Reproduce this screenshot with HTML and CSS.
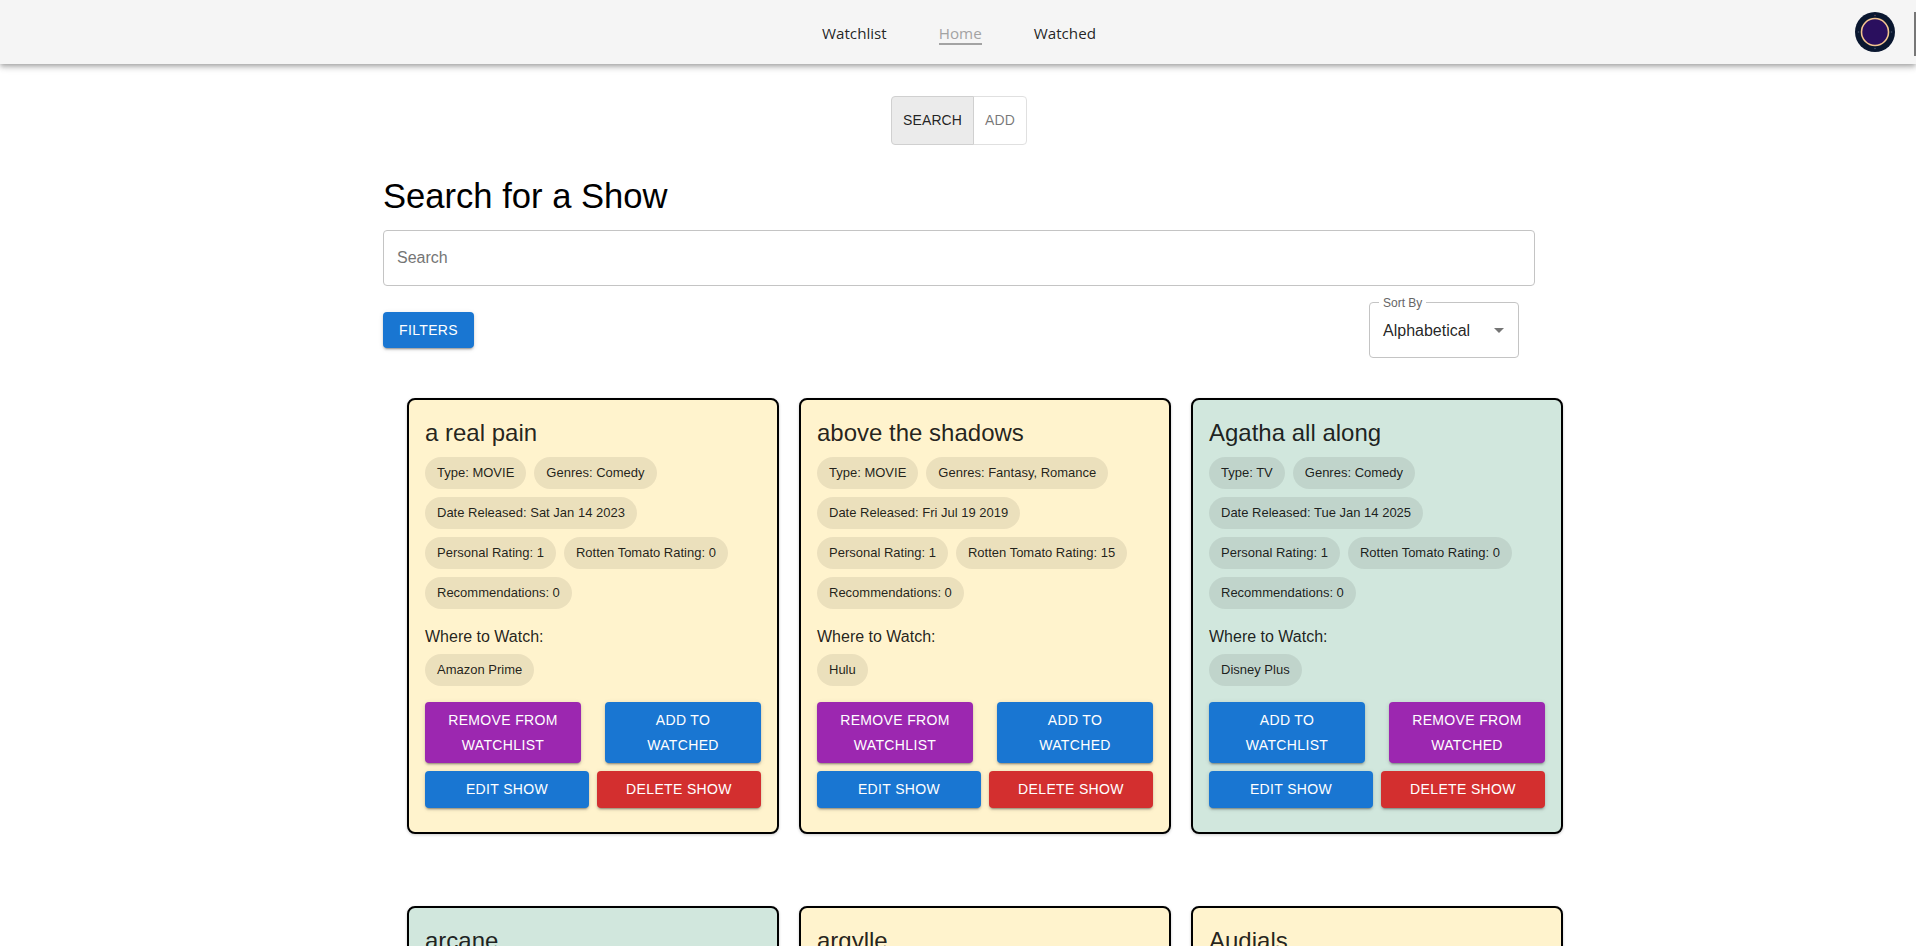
FILE: index.html
```html
<!DOCTYPE html>
<html lang="en">
<head>
    <meta charset="UTF-8">
    <title>Show Tracker</title>
    <link rel="stylesheet" href="styles.css">
</head>
<body>
    <header class="topbar">
        <nav class="topnav">
            <a class="navlink" href="#">Watchlist</a>
            <a class="navlink active" href="#">Home</a>
            <a class="navlink" href="#">Watched</a>
        </nav>
        <svg class="avatar" width="40" height="40" viewBox="0 0 40 40">
            <circle cx="20" cy="20" r="20" fill="#0a1730"/>
            <circle cx="20" cy="20" r="13.5" fill="#2a0f5e" stroke="#f3c48f" stroke-width="1.6"/>
            <circle cx="20" cy="3.5" r="0.8" fill="#6b4a55"/>
            <circle cx="20" cy="36.5" r="0.8" fill="#44506b"/>
            <circle cx="3.5" cy="20" r="0.8" fill="#44506b"/>
            <circle cx="36.5" cy="20" r="0.8" fill="#44506b"/>
        </svg>
        <span class="edgebar"></span>
    </header>

    <main class="page">
        <div class="toggle">
            <button class="togglebtn selected">Search</button>
            <button class="togglebtn">Add</button>
        </div>

        <div class="searchwrap">
            <h1 class="pagetitle">Search for a Show</h1>
            <input class="searchbox" type="text" placeholder="Search">
            <div class="toolbar">
                <button class="btn blue">Filters</button>
                <div class="sortbox">
                    <span class="sortlabel">Sort By</span>
                    <span>Alphabetical</span>
                    <svg class="caret" width="10" height="5" viewBox="0 0 10 5"><path d="M0 0h10L5 5z" fill="#757575"/></svg>
                </div>
            </div>

            <div class="cards">
                <article class="card movie">
                    <h2 class="cardtitle">a real pain</h2>
                    <div class="chips">
                        <div class="chiprow">
                            <span class="chip">Type: MOVIE</span>
                            <span class="chip">Genres: Comedy</span>
                        </div>
                        <div class="chiprow">
                            <span class="chip">Date Released: Sat Jan 14 2023</span>
                        </div>
                        <div class="chiprow">
                            <span class="chip">Personal Rating: 1</span>
                            <span class="chip">Rotten Tomato Rating: 0</span>
                        </div>
                        <div class="chiprow">
                            <span class="chip">Recommendations: 0</span>
                        </div>
                    </div>
                    <p class="wherelabel">Where to Watch:</p>
                    <div class="chiprow">
                        <span class="chip">Amazon Prime</span>
                    </div>
                    <div class="listbtns">
                        <button class="btn purple">Remove from Watchlist</button>
                        <button class="btn blue">Add to Watched</button>
                    </div>
                    <div class="editbtns">
                        <button class="btn blue">Edit Show</button>
                        <button class="btn red">Delete Show</button>
                    </div>
                </article>

                <article class="card movie">
                    <h2 class="cardtitle">above the shadows</h2>
                    <div class="chips">
                        <div class="chiprow">
                            <span class="chip">Type: MOVIE</span>
                            <span class="chip">Genres: Fantasy, Romance</span>
                        </div>
                        <div class="chiprow">
                            <span class="chip">Date Released: Fri Jul 19 2019</span>
                        </div>
                        <div class="chiprow">
                            <span class="chip">Personal Rating: 1</span>
                            <span class="chip">Rotten Tomato Rating: 15</span>
                        </div>
                        <div class="chiprow">
                            <span class="chip">Recommendations: 0</span>
                        </div>
                    </div>
                    <p class="wherelabel">Where to Watch:</p>
                    <div class="chiprow">
                        <span class="chip">Hulu</span>
                    </div>
                    <div class="listbtns">
                        <button class="btn purple">Remove from Watchlist</button>
                        <button class="btn blue">Add to Watched</button>
                    </div>
                    <div class="editbtns">
                        <button class="btn blue">Edit Show</button>
                        <button class="btn red">Delete Show</button>
                    </div>
                </article>

                <article class="card tv">
                    <h2 class="cardtitle">Agatha all along</h2>
                    <div class="chips">
                        <div class="chiprow">
                            <span class="chip">Type: TV</span>
                            <span class="chip">Genres: Comedy</span>
                        </div>
                        <div class="chiprow">
                            <span class="chip">Date Released: Tue Jan 14 2025</span>
                        </div>
                        <div class="chiprow">
                            <span class="chip">Personal Rating: 1</span>
                            <span class="chip">Rotten Tomato Rating: 0</span>
                        </div>
                        <div class="chiprow">
                            <span class="chip">Recommendations: 0</span>
                        </div>
                    </div>
                    <p class="wherelabel">Where to Watch:</p>
                    <div class="chiprow">
                        <span class="chip">Disney Plus</span>
                    </div>
                    <div class="listbtns">
                        <button class="btn blue">Add to Watchlist</button>
                        <button class="btn purple">Remove from Watched</button>
                    </div>
                    <div class="editbtns">
                        <button class="btn blue">Edit Show</button>
                        <button class="btn red">Delete Show</button>
                    </div>
                </article>

                <article class="card tv">
                    <h2 class="cardtitle">arcane</h2>
                </article>
                <article class="card movie">
                    <h2 class="cardtitle">argylle</h2>
                </article>
                <article class="card movie">
                    <h2 class="cardtitle">Audials</h2>
                </article>
            </div>
        </div>
    </main>
</body>
</html>
```

FILE: styles.css
```css
html, body {
    height: 100%;
    overflow: hidden;
}

body {
    margin: 0;
    background-color: #fff;
    color: #000;
    font-family: "Liberation Sans", Arial, sans-serif;
}

button {
    font-family: inherit;
    cursor: pointer;
}

.topbar {
    position: relative;
    height: 64px;
    display: flex;
    align-items: center;
    justify-content: center;
    padding-left: 2px;
    background-color: #f5f5f5;
    box-shadow: 0 2px 4px -1px rgba(0,0,0,0.2), 0 4px 5px 0 rgba(0,0,0,0.14), 0 1px 10px 0 rgba(0,0,0,0.12);
}

.topnav {
    display: flex;
    gap: 52px;
    padding-top: 1px;
}

.navlink {
    font-family: "Open Sans", sans-serif;
    font-size: 15.2px;
    line-height: 20px;
    color: rgba(0,0,0,0.87);
    text-decoration: none;
}

.navlink.active {
    color: #a3a3a3;
    box-shadow: 0 2px 0 #a3a3a3;
}

.avatar {
    position: absolute;
    top: 12px;
    right: 21px;
}

.edgebar {
    position: absolute;
    top: 12px;
    right: 0;
    width: 2px;
    height: 44px;
    background-color: #777;
}

.page {
    padding-top: 32px;
    padding-left: 2px;
}

.toggle {
    display: flex;
    justify-content: center;
}

.togglebtn {
    padding: 11px;
    border: 1px solid #e0e0e0;
    background-color: #fff;
    color: rgba(0,0,0,0.54);
    font-size: 14px;
    line-height: 24.5px;
    letter-spacing: 0.1px;
    text-transform: uppercase;
    border-radius: 0 4px 4px 0;
    margin-left: -1px;
}

.togglebtn.selected {
    background-color: #ebebeb;
    color: rgba(0,0,0,0.87);
    border-color: #d0d0d0;
    border-radius: 4px 0 0 4px;
    margin-left: 0;
    position: relative;
}

.searchwrap {
    width: 1152px;
    margin: 0 auto;
}

.pagetitle {
    margin: 30.5px 0 13px;
    font-size: 34.6px;
    line-height: 42px;
    font-weight: 400;
}

.searchbox {
    display: block;
    box-sizing: border-box;
    width: 100%;
    height: 56px;
    padding: 0 13px;
    border: 1px solid #c4c4c4;
    border-radius: 4px;
    outline: none;
    font-family: inherit;
    font-size: 16px;
}

.searchbox::placeholder {
    color: #757575;
    opacity: 1;
}

.toolbar {
    display: flex;
    align-items: center;
    justify-content: space-between;
    margin-top: 16px;
    padding-right: 16px;
}

.btn {
    padding: 6px 16px;
    border: none;
    border-radius: 4px;
    color: #fff;
    font-size: 14px;
    line-height: 24.5px;
    letter-spacing: 0.35px;
    text-transform: uppercase;
    box-shadow: 0 3px 1px -2px rgba(0,0,0,0.2), 0 2px 2px 0 rgba(0,0,0,0.14), 0 1px 5px 0 rgba(0,0,0,0.12);
}

.blue { background-color: #1976d2; }
.purple { background-color: #9c27b0; }
.red { background-color: #d32f2f; }

.sortbox {
    position: relative;
    box-sizing: border-box;
    width: 150px;
    height: 56px;
    display: flex;
    align-items: center;
    justify-content: space-between;
    padding: 1px 14px 0 13px;
    border: 1px solid #c4c4c4;
    border-radius: 4px;
    font-size: 16px;
    color: rgba(0,0,0,0.87);
}

.sortlabel {
    position: absolute;
    top: -7px;
    left: 9px;
    padding: 0 4px;
    background-color: #fff;
    color: #666;
    font-size: 12px;
    line-height: 14px;
}

.cards {
    display: grid;
    grid-template-columns: repeat(3, 372px);
    column-gap: 20px;
    row-gap: 72px;
    margin-top: 40px;
    margin-left: 24px;
}

.card {
    box-sizing: border-box;
    height: 436px;
    padding: 16px;
    border: 2px solid #000;
    border-radius: 8px;
    color: rgba(0,0,0,0.87);
    box-shadow: 0 1px 3px rgba(0,0,0,0.2);
}

.movie { background-color: #fff3cd; }
.tv { background-color: #d1e7dd; }

.cardtitle {
    margin: 0 0 8px;
    padding-top: 1px;
    font-size: 24px;
    line-height: 32px;
    font-weight: 400;
}

.chips {
    display: flex;
    flex-direction: column;
    gap: 8px;
}

.chiprow {
    display: flex;
    gap: 8px;
}

.chip {
    height: 32px;
    padding: 0 12px;
    border-radius: 16px;
    background-color: rgba(0,0,0,0.08);
    font-size: 13px;
    line-height: 32px;
}

.wherelabel {
    margin: 16px 0 5px;
    font-size: 16px;
    line-height: 24px;
}

.listbtns {
    display: flex;
    justify-content: space-between;
    margin-top: 16px;
}

.listbtns .btn {
    width: 156px;
}

.editbtns {
    display: grid;
    grid-template-columns: 1fr 1fr;
    gap: 8px;
    margin-top: 8px;
}
```
